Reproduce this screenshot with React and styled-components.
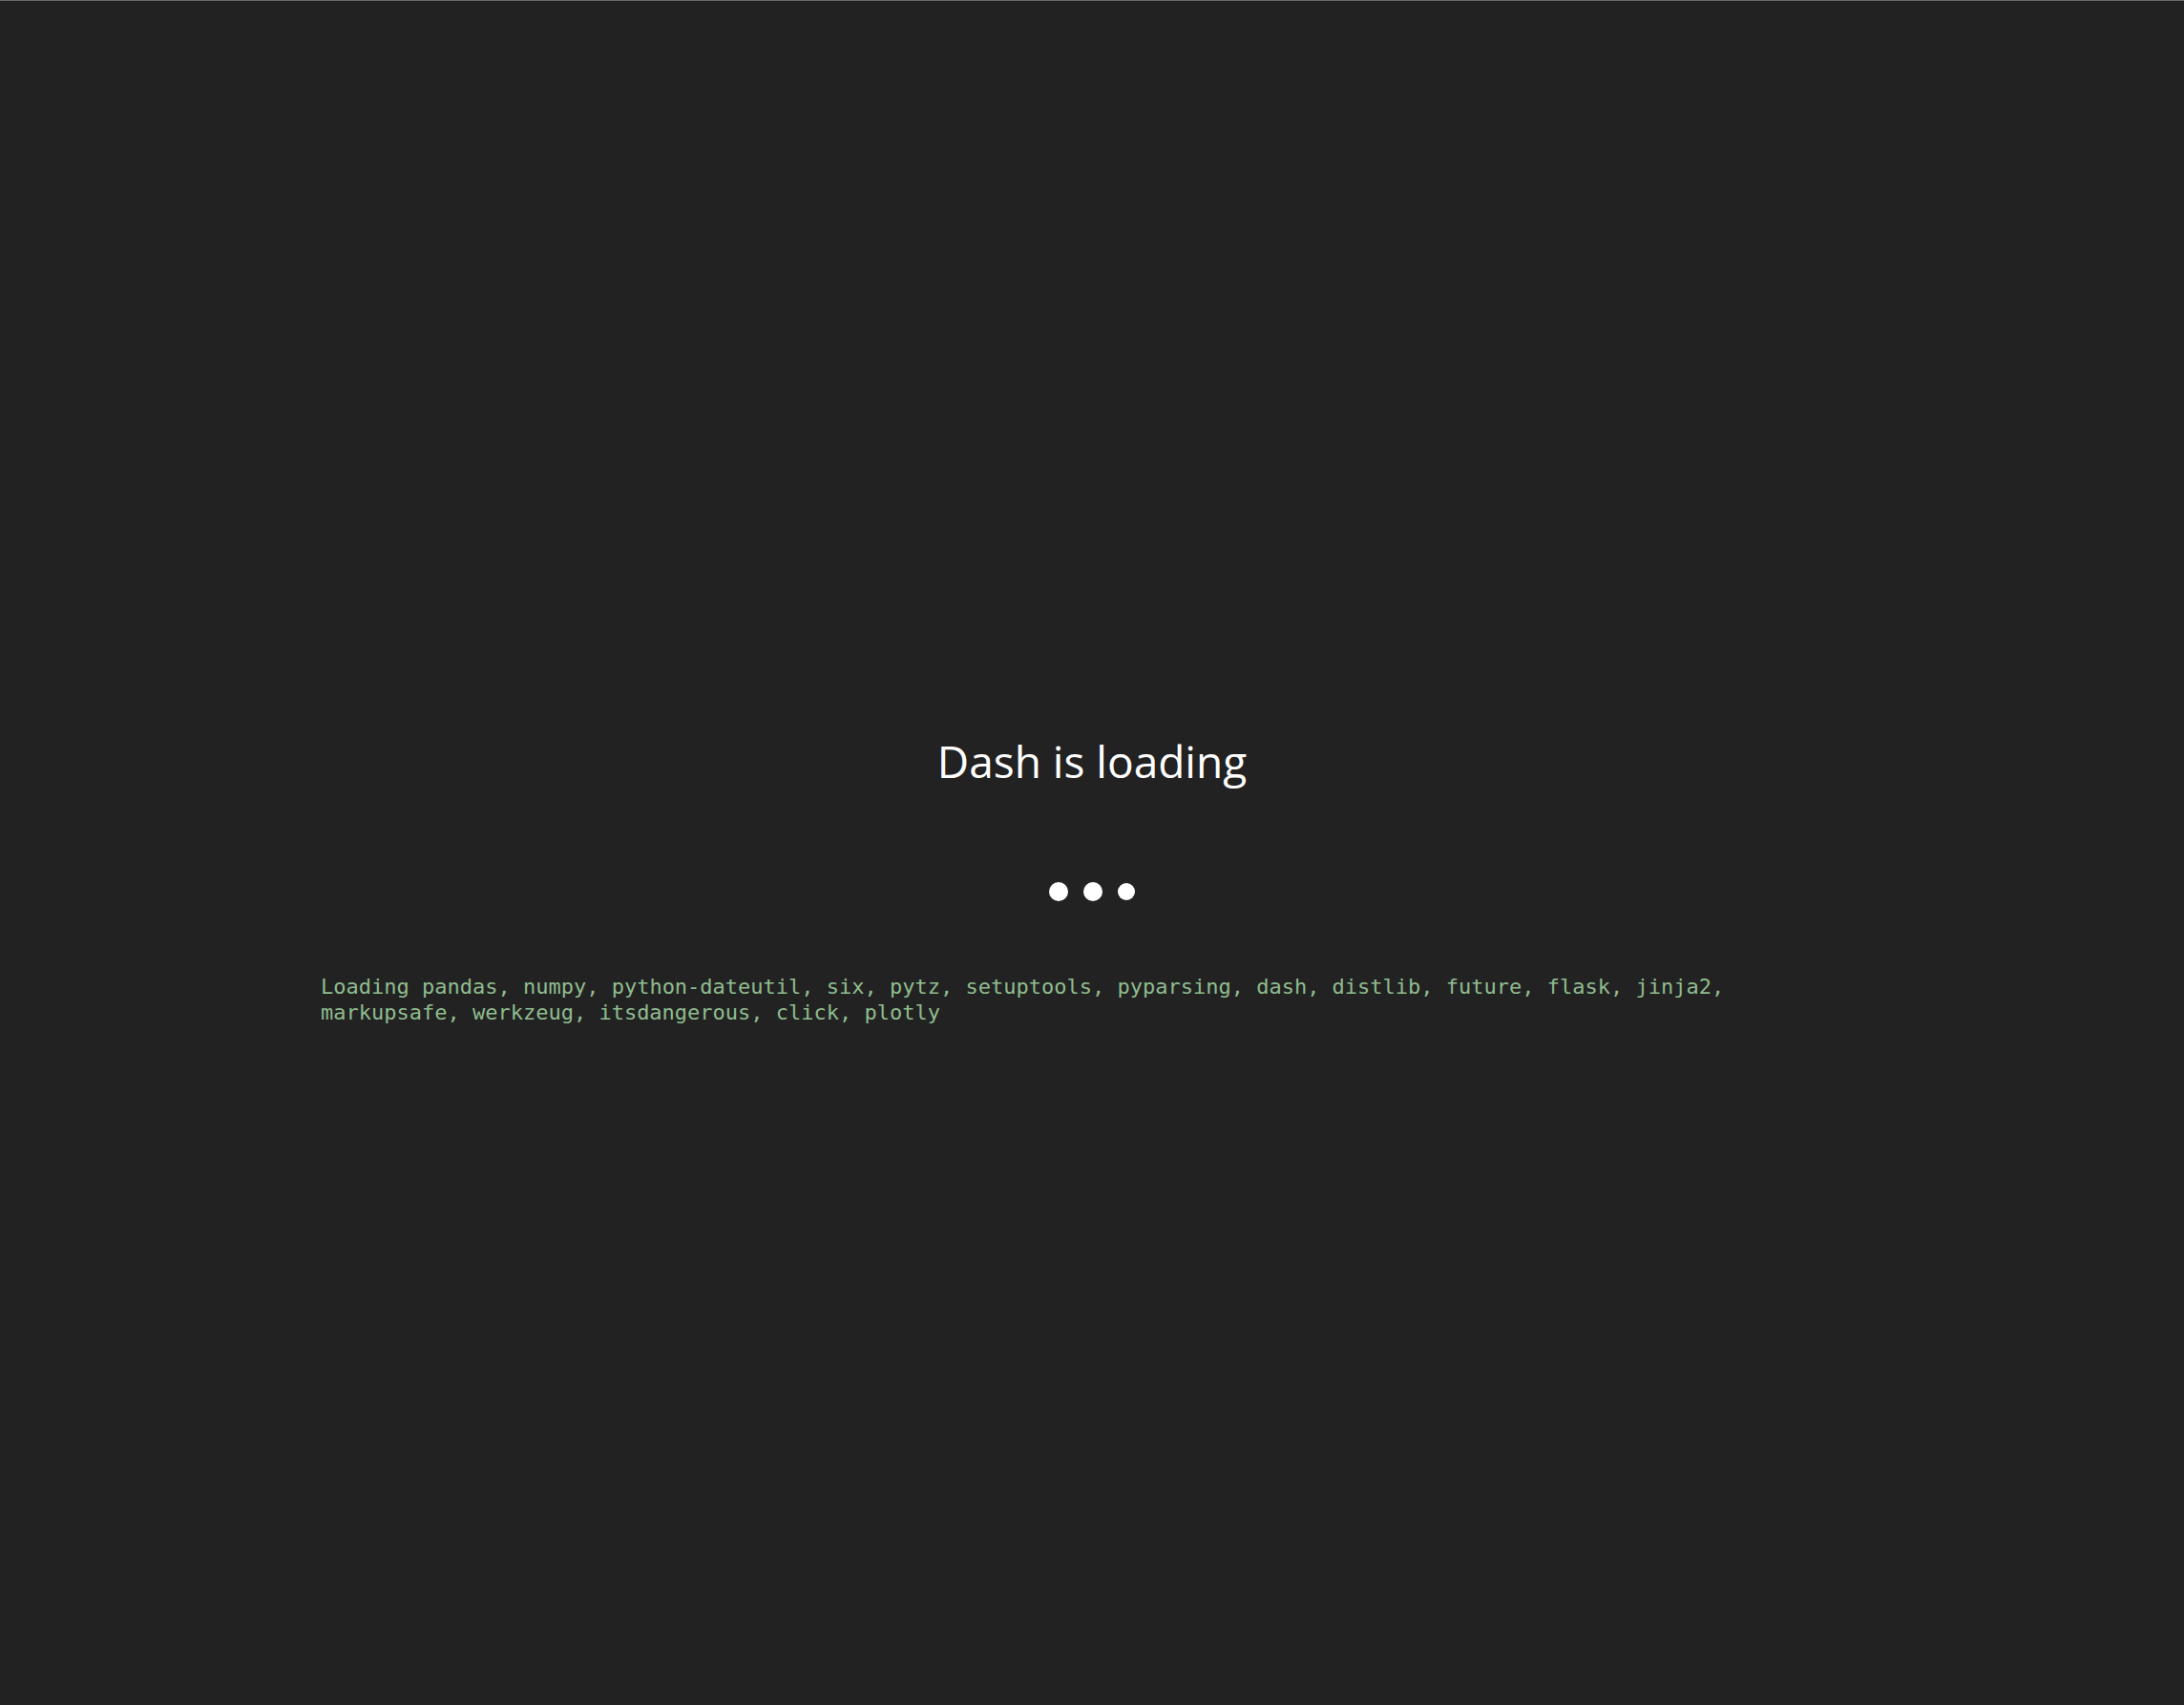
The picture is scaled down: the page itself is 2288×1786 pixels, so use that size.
import React from 'react';
import styled, { createGlobalStyle } from 'styled-components';

const GlobalStyle = createGlobalStyle`
  html, body {
    margin: 0;
    padding: 0;
    background: #222222;
  }
  #root {
    min-height: 100vh;
  }
`;

const Page = styled.div`
  min-height: 1786px;
  box-sizing: border-box;
  background: #222222;
  border-top: 1px solid #6a6a6a;
  display: flex;
  flex-direction: column;
  align-items: center;
  padding-top: 764px;
`;

const Title = styled.h1`
  margin: 0;
  font-family: "Open Sans", "Noto Sans", sans-serif;
  font-weight: 400;
  font-size: 46px;
  line-height: 64px;
  color: #ffffff;
`;

const Dots = styled.div`
  display: flex;
  align-items: center;
  gap: 16px;
  height: 24px;
  margin-top: 93px;
`;

const Dot = styled.span`
  display: block;
  width: ${p => p.size}px;
  height: ${p => p.size}px;
  border-radius: 50%;
  background: #ffffff;
`;

const Status = styled.div`
  width: 1616px;
  margin-top: 74px;
  font-family: "DejaVu Sans Mono", "Liberation Mono", monospace;
  font-size: 22px;
  line-height: 27px;
  color: #8fbc8f;
`;

const packages = [
  'pandas', 'numpy', 'python-dateutil', 'six', 'pytz', 'setuptools',
  'pyparsing', 'dash', 'distlib', 'future', 'flask', 'jinja2',
  'markupsafe', 'werkzeug', 'itsdangerous', 'click', 'plotly',
];

export default function App() {
  return (
    <>
      <GlobalStyle />
      <Page>
        <Title>Dash is loading</Title>
        <Dots>
          <Dot size={20} />
          <Dot size={20} />
          <Dot size={18} />
        </Dots>
        <Status>Loading {packages.join(', ')}</Status>
      </Page>
    </>
  );
}
